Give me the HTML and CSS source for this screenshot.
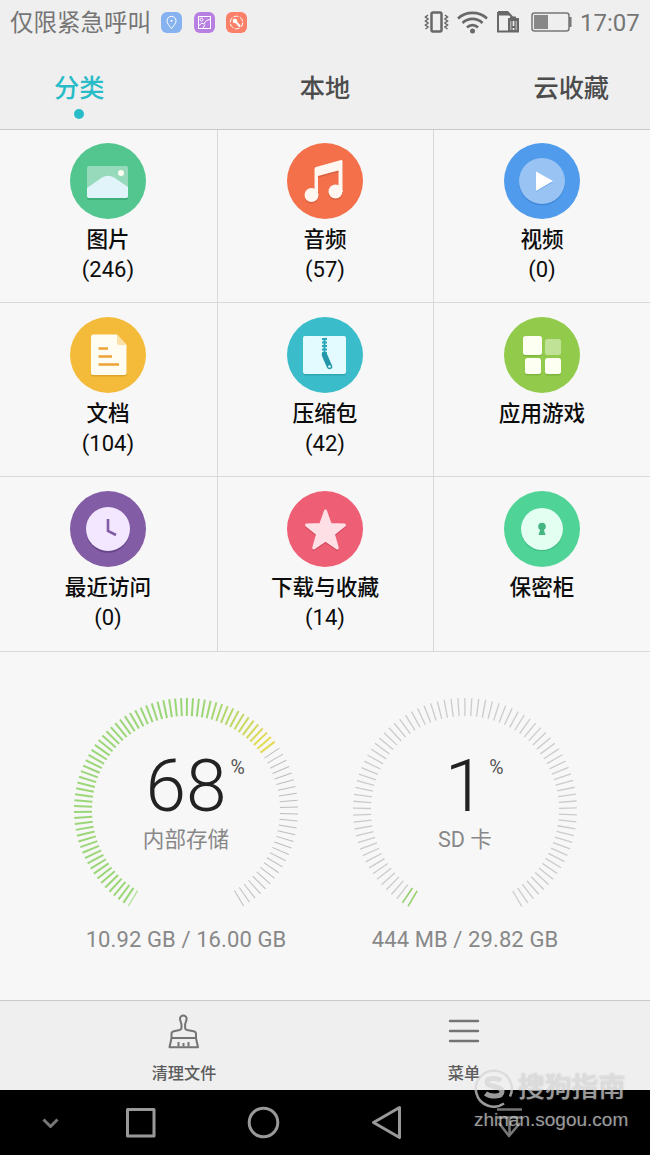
FILE: index.html
```html
<!DOCTYPE html>
<html lang="zh-CN">
<head>
    <meta charset="UTF-8">
    <meta name="viewport" content="width=device-width, initial-scale=1.0">
    <title>文件管理</title>
    <link rel="stylesheet" href="styles.css">
</head>
<body>
    <div class="screen">
        <div class="statusbar">
            <span class="carrier">仅限紧急呼叫</span>
            <div class="notices">
                <svg width="21" height="21" viewBox="0 0 21 21" fill="none" stroke="#fff">
                    <rect width="21" height="21" rx="6" fill="#86b3f0" stroke="none"/>
                    <path d="M10.5 16.5C8 13.5 6 11.2 6 8.8a4.5 4.5 0 0 1 9 0c0 2.4-2 4.7-4.5 7.7z"/>
                    <circle cx="10.5" cy="8.8" r="1" fill="#fff" stroke="none"/>
                </svg>
                <svg width="21" height="21" viewBox="0 0 21 21" fill="none" stroke="#fff">
                    <rect width="21" height="21" rx="6" fill="#b87fe2" stroke="none"/>
                    <rect x="4.5" y="4.5" width="12" height="12"/>
                    <circle cx="7.5" cy="7.5" r="1.5"/>
                    <path d="M5 13.5l3-2.5 2 1c1-3 3-4 6-4.5M9 16l2-3.5"/>
                </svg>
                <svg width="21" height="21" viewBox="0 0 21 21" fill="none" stroke="#fff">
                    <rect width="21" height="21" rx="6" fill="#fb8069" stroke="none"/>
                    <circle cx="10.5" cy="10.5" r="6.3" stroke-dasharray="5 1.5"/>
                    <circle cx="9" cy="9" r="2.3" fill="#fff" stroke="none"/>
                    <path d="M10 10l4 4.5" stroke-width="2"/>
                </svg>
            </div>
            <div class="indicators">
                <svg width="25" height="22" viewBox="0 0 25 22" fill="none" stroke="#686868">
                    <rect x="7.5" y="1.5" width="10" height="19" rx="1.5" stroke-width="2.5"/>
                    <path d="M4 4L1.5 6 4 8 1.5 10 4 12 1.5 14 4 16 1.5 18M21 4l2.5 2L21 8l2.5 2-2.5 2 2.5 2-2.5 2 2.5 2" stroke-width="1.6"/>
                </svg>
                <svg width="31" height="23" viewBox="0 0 31 23" fill="none" stroke="#686868" stroke-width="2.6">
                    <path d="M1 7.5c8-7.500 21-7.500 29 0M5.5 12c5.5-5.5 14.500-5.500 20 0M10 16.500c3-3.200 8-3.200 11 0"/>
                    <circle cx="15.5" cy="20" r="2.5" fill="#686868" stroke="none"/>
                </svg>
                <svg width="22" height="22" viewBox="0 0 22 22">
                    <path d="M1 1h9.500l4.500 5v2M1 1v19.500h10" fill="none" stroke="#686868" stroke-width="2"/>
                    <path d="M1 0h9.500L14.500 4.500H1zM11 7h2V5.500h6V7h3v14.500H11z" fill="#686868"/>
                    <path d="M13 10h1.500v9H13zM18.500 10H20v9h-1.500z" fill="#aaa"/>
                    <path d="M16.500 10v5M16.500 17v2" stroke="#efefef" stroke-width="1.7"/>
                </svg>
                <svg class="battery" width="41" height="20" viewBox="0 0 41 20">
                    <rect x="1" y="1" width="37" height="18" rx="2.5" fill="none" stroke="#777" stroke-width="1.5"/>
                    <rect x="3" y="3" width="14" height="14" fill="#888"/>
                    <path d="M38 5h2.500v10H38z" fill="#777"/>
                </svg>
            </div>
            <span class="time">17:07</span>
        </div>

        <div class="tabs">
            <div class="tab active">分类</div>
            <div class="tab">本地</div>
            <div class="tab">云收藏</div>
        </div>

        <div class="categories">
            <div class="category">
                <svg class="icon" viewBox="0 0 76 76">
                    <circle cx="38" cy="38" r="38" fill="#53c690"/>
                    <rect x="17" y="25" width="41" height="32" rx="2" fill="#3fb07b"/>
                    <rect x="17" y="23" width="41" height="32" rx="2" fill="#96dabb"/>
                    <path d="M17 45L32 34.500q6-3.500 12 0L58 44v9q0 2-2 2H19q-2 0-2-2z" fill="#e0f4f9"/>
                    <circle cx="51" cy="30" r="3" fill="#fffdf0"/>
                </svg>
                <div class="name">图片</div>
                <div class="count">(246)</div>
            </div>
            <div class="category">
                <svg class="icon" viewBox="0 0 76 76">
                    <circle cx="38" cy="38" r="38" fill="#f3704a"/>
                    <g fill="#d75f3e" transform="translate(0 1.5)">
                        <path d="M27.500 52V26q0-1.500 1.500-2l25-7q1.500 0 1.500 1v31h-4V27.500L31 33v19z"/>
                        <circle cx="24.5" cy="52" r="7"/>
                        <circle cx="48.5" cy="48.5" r="7"/>
                    </g>
                    <g fill="#fff7f0">
                        <path d="M27.500 52V26q0-1.500 1.500-2l25-7q1.500 0 1.500 1v31h-4V27.500L31 33v19z"/>
                        <circle cx="24.5" cy="52" r="7"/>
                        <circle cx="48.5" cy="48.5" r="7"/>
                    </g>
                </svg>
                <div class="name">音频</div>
                <div class="count">(57)</div>
            </div>
            <div class="category">
                <svg class="icon" viewBox="0 0 76 76">
                    <circle cx="38" cy="38" r="38" fill="#509bec"/>
                    <circle cx="38" cy="39.5" r="23" fill="#4088d7"/>
                    <circle cx="38" cy="38" r="23" fill="#98c3f3"/>
                    <path d="M32 29.500v19.500l17-10z" fill="#6da9e9"/>
                    <path d="M32 28.500v19.500l17-10z" fill="#fff"/>
                </svg>
                <div class="name">视频</div>
                <div class="count">(0)</div>
            </div>

            <div class="category">
                <svg class="icon" viewBox="0 0 76 76">
                    <circle cx="38" cy="38" r="38" fill="#f4bb3a"/>
                    <rect x="21" y="30" width="35.5" height="29.5" rx="2" fill="#dda42c"/>
                    <path d="M23 17.500h24L56.500 28v27.500q0 2.500-2 2.500H23q-2 0-2-2.500V20q0-2.500 2-2.500z" fill="#fffdf2"/>
                    <path d="M47 17.500L56.500 28H49q-2 0-2-2z" fill="#fbe1a7"/>
                    <path d="M28.500 31.500h9.500M28.500 39.500h13.500M28.500 47.500h20.500" stroke="#eda334" stroke-width="2.4"/>
                </svg>
                <div class="name">文档</div>
                <div class="count">(104)</div>
            </div>
            <div class="category">
                <svg class="icon" viewBox="0 0 76 76">
                    <circle cx="38" cy="38" r="38" fill="#3bbccb"/>
                    <rect x="16" y="20.5" width="43" height="38" rx="2" fill="#2fa4b3"/>
                    <rect x="16" y="19" width="43" height="38" rx="2" fill="#e3fbff"/>
                    <path d="M37.500 21v18" stroke="#2ca8bb" stroke-width="5" stroke-dasharray="2 1.5"/>
                    <path d="M37.500 21v20" stroke="#2ca8bb" stroke-width="2"/>
                    <path d="M37.500 38l5 11.500" stroke="#2597aa" stroke-width="5.5" stroke-linecap="round"/>
                    <circle cx="42.5" cy="49.5" r="1.3" fill="#e3fbff"/>
                </svg>
                <div class="name">压缩包</div>
                <div class="count">(42)</div>
            </div>
            <div class="category">
                <svg class="icon" viewBox="0 0 76 76">
                    <circle cx="38" cy="38" r="38" fill="#92ca4b"/>
                    <rect x="19" y="20.5" width="19" height="19" rx="2.5" fill="#7eb53c"/>
                    <rect x="21" y="42" width="16" height="16.5" rx="2.5" fill="#7eb53c"/>
                    <rect x="41" y="42" width="16" height="16.5" rx="2.5" fill="#7eb53c"/>
                    <rect x="19" y="19" width="19" height="19" rx="2.5" fill="#fcfff2"/>
                    <rect x="41" y="22" width="16" height="16" rx="2.5" fill="#c0e296"/>
                    <rect x="21" y="41" width="16" height="16" rx="2.5" fill="#fcfff2"/>
                    <rect x="41" y="41" width="16" height="16" rx="2.5" fill="#fcfff2"/>
                </svg>
                <div class="name">应用游戏</div>
            </div>

            <div class="category">
                <svg class="icon" viewBox="0 0 76 76">
                    <circle cx="38" cy="38" r="38" fill="#825ca5"/>
                    <circle cx="38" cy="39.8" r="22" fill="#684689"/>
                    <circle cx="38" cy="38" r="22" fill="#f3e7ff"/>
                    <path d="M38 28v12l8 4" fill="none" stroke="#825ca5" stroke-width="2.6"/>
                </svg>
                <div class="name">最近访问</div>
                <div class="count">(0)</div>
            </div>
            <div class="category">
                <svg class="icon" viewBox="0 0 76 76">
                    <circle cx="38" cy="38" r="38" fill="#ee5e74"/>
                    <path d="M38.500 21.500l4.800 13.500 14.200.5-11.200 9 4 14-11.800-8-11.800 8 4-14-11.200-9 14.200-.5z" fill="#d54b62" stroke="#d54b62" stroke-width="3" stroke-linejoin="round"/>
                    <path d="M38.500 20l4.800 13.500 14.200.5-11.200 9 4 14-11.800-8-11.800 8 4-14-11.200-9 14.200-.5z" fill="#ffdfe6" stroke="#ffdfe6" stroke-width="3" stroke-linejoin="round"/>
                </svg>
                <div class="name">下载与收藏</div>
                <div class="count">(14)</div>
            </div>
            <div class="category">
                <svg class="icon" viewBox="0 0 76 76">
                    <circle cx="38" cy="38" r="38" fill="#50d397"/>
                    <circle cx="38" cy="39.3" r="21" fill="#3fbd84"/>
                    <circle cx="38" cy="38" r="21" fill="#e2fff2"/>
                    <circle cx="38" cy="35.5" r="3.8" fill="#45b581"/>
                    <path d="M37 36h2l2.500 8h-7z" fill="#45b581"/>
                </svg>
                <div class="name">保密柜</div>
            </div>
        </div>

        <div class="storage">
            <div class="gauge-box">
                <div class="gauge">
                    <svg class="ticks" id="internal" viewBox="-113 -113 226 226"></svg>
                    <div class="readout">
                        <div class="percent"><span class="value">68</span><span class="sign">%</span></div>
                        <div class="place">内部存储</div>
                    </div>
                </div>
                <div class="usage">10.92 GB / 16.00 GB</div>
            </div>
            <div class="gauge-box">
                <div class="gauge">
                    <svg class="ticks" id="sdcard" viewBox="-113 -113 226 226"></svg>
                    <div class="readout">
                        <div class="percent"><span class="value">1</span><span class="sign">%</span></div>
                        <div class="place">SD 卡</div>
                    </div>
                </div>
                <div class="usage">444 MB / 29.82 GB</div>
            </div>
        </div>

        <div class="toolbar">
            <div class="tool">
                <svg width="32" height="36" viewBox="0 0 32 36" fill="none" stroke="#747474" stroke-width="2" stroke-linejoin="round">
                    <path d="M13.500 11.500c-.5-2.500-1.500-4-1.500-5.800a3.300 3.300 0 0 1 6.600 0c0 1.800-1 3.300-1.500 5.800v3q0 2 2 2.500l6.400 1.200q2.500.5 2.500 2.500v4.500l2 9H1.500l2-9v-4.500q0-2 2.500-2.500l5.500-1.200q2-.5 2-2.500z"/>
                    <path d="M3.500 25h24.500M10.500 33.500v-4.500M15.500 33.500v-3.500M20.500 33.500v-4.500"/>
                </svg>
                <div class="tool-name">清理文件</div>
            </div>
            <div class="tool">
                <svg width="32" height="36" viewBox="0 0 32 36" stroke="#747474" stroke-width="2.4" stroke-linecap="round">
                    <path d="M2 8h28M2 18h28M2 28h28"/>
                </svg>
                <div class="tool-name">菜单</div>
            </div>
        </div>

        <div class="navbar">
            <svg width="650" height="65" viewBox="0 0 650 65" fill="none" stroke="#999" stroke-width="3" stroke-linejoin="round">
                <path d="M43.500 29.500l7 7 7-7" stroke="#777"/>
                <rect x="127.5" y="19.5" width="26.5" height="26.5"/>
                <circle cx="263.5" cy="32.5" r="14.3"/>
                <path d="M373.500 32.500L399.500 17.500v30z"/>
                <path d="M497 19.500h25M497 27.500h25M499 33l10 13 11-13M509.500 29v15" stroke="#777" stroke-width="2.6"/>
            </svg>
        </div>

        <div class="watermark">
            <div class="brand">
                <svg width="40" height="40" viewBox="0 0 40 40" fill="none" stroke="#d6d6d6">
                    <path d="M30 35.500A18 18 0 1 1 36 28.500" stroke-width="2.5"/>
                    <path d="M27 12.500c-3-2.500-14-3.500-14 1.500 0 5.500 15 3.500 15 9.500 0 6-12 5.500-16.500 2" stroke-width="5"/>
                </svg>
                <span>搜狗指南</span>
            </div>
            <div class="site">zhinan.sogou.com</div>
        </div>
    </div>
    <script>
        // angles are degrees clockwise from the top of the dial
        const drawTicks = (id, from, to, count, width, color) => {
            const svg = document.getElementById(id);
            for (let i = 0; i < count; i++) {
                const angle = from + (to - from) * i / (count - 1);
                const line = document.createElementNS('http://www.w3.org/2000/svg', 'line');
                line.setAttribute('y1', -112);
                line.setAttribute('y2', -94);
                line.setAttribute('transform', `rotate(${angle})`);
                line.setAttribute('stroke', color(angle));
                line.setAttribute('stroke-width', width);
                svg.appendChild(line);
            }
        };

        // green, fading to yellow past the top
        const fill = (angle) => {
            const t = Math.min(1, Math.max(0, (angle - 10) / 38));
            return `rgb(${155 + 72 * t}, ${214 + 4 * t}, ${120 - 35 * t})`;
        };

        drawTicks('internal', -149, -149, 2, 1.2, () => '#bfe5aa');
        drawTicks('internal', -146, 52.4, 66, 2, fill);
        drawTicks('internal', 56.5, 149, 27, 1, () => '#bdbdbd');
        drawTicks('sdcard', -149.4, -146, 2, 1.6, () => '#94cf70');
        drawTicks('sdcard', -142.5, 149.5, 83, 1.3, () => '#cbcbcb');
    </script>
</body>
</html>
```
FILE: styles.css
```css
* {
    box-sizing: border-box;
}

body {
    margin: 0;
    font-family: Roboto, 'Noto Sans CJK SC', sans-serif;
    background: #f7f7f7;
}

svg {
    display: block;
    flex-shrink: 0;
}

.screen {
    position: relative;
    width: 650px;
    height: 1155px;
    display: flex;
    flex-direction: column;
    overflow: hidden;
}

.statusbar {
    display: flex;
    align-items: center;
    height: 44px;
    padding: 0 11px 0 10px;
    background: #efefef;
    color: #757575;
}

.carrier {
    padding-top: 2px;
    font-size: 23.5px;
    line-height: 42px;
}

.notices {
    display: flex;
    gap: 11.5px;
    margin-left: 10px;
}

.indicators {
    display: flex;
    align-items: center;
    gap: 8.5px;
    margin-left: auto;
}

.battery {
    margin-left: 4px;
}

.time {
    width: 59px;
    padding-top: 1px;
    margin-left: 8px;
    font-size: 24px;
    white-space: nowrap;
}

.tabs {
    display: grid;
    grid-template-columns: 1fr auto 1fr;
    height: 86px;
    padding: 27px 41px 0 54px;
    background: #efefef;
    border-bottom: 1px solid #c9c9c9;
}

.tab {
    font-size: 25.2px;
    font-weight: 500;
    line-height: 36px;
    color: #4c4c4c;
}

.tab:nth-child(2) {
    padding-right: 13px;
}

.tab:last-child {
    justify-self: end;
}

.tab.active {
    justify-self: start;
    color: #28bcc8;
}

.tab.active::after {
    content: '';
    display: block;
    width: 10px;
    height: 10px;
    margin: 2px auto 0;
    border-radius: 50%;
    background: #28bcc8;
}

.categories {
    display: grid;
    grid-template-columns: 218px 216px 216px;
    grid-template-rows: 173px 174px 175px;
}

.category {
    display: flex;
    flex-direction: column;
    align-items: center;
    padding: 13px 1px 0 0;
    border-right: 1px solid #d8d8d8;
    border-bottom: 1px solid #d8d8d8;
    color: #0c0c0c;
}

.category:nth-child(n+4) {
    padding-top: 14px;
}

.category:nth-child(3n) {
    padding-right: 0;
    border-right: none;
}

.icon {
    width: 76px;
    height: 76px;
}

.name {
    margin-top: 6px;
    font-size: 21.6px;
    font-weight: 500;
    line-height: 30px;
}

.count {
    font-size: 22px;
    line-height: 30px;
}

.storage {
    display: grid;
    grid-template-columns: 279px 279px;
    height: 348px;
    padding: 45px 46px 0 46.5px;
}

.gauge-box {
    text-align: center;
}

.gauge {
    display: grid;
    justify-items: center;
}

.ticks,
.readout {
    grid-area: 1 / 1;
}

.ticks {
    width: 226px;
    height: 226px;
}

.readout {
    width: 200px;
    padding-top: 51px;
}

.percent {
    display: grid;
    grid-template-columns: 1fr auto 1fr;
    color: #222;
    font-weight: 300;
}

.value {
    grid-column: 2;
    font-size: 73px;
    line-height: 76px;
}

.sign {
    padding: 9px 0 0 4px;
    font-size: 19.5px;
    font-weight: 400;
    line-height: 22px;
    text-align: left;
    color: #555;
}

.place {
    margin-top: 1px;
    font-size: 21.6px;
    line-height: 30px;
    color: #888;
}

.usage {
    margin-top: 2px;
    font-size: 22px;
    line-height: 30px;
    letter-spacing: 0.1px;
    color: #888;
}

.toolbar {
    display: grid;
    grid-template-columns: 280px 280px;
    height: 90px;
    padding: 12px 46px 0 44px;
    background: #efefef;
    border-top: 1px solid #c9c9c9;
}

.tool {
    display: flex;
    flex-direction: column;
    align-items: center;
}

.tool-name {
    margin-top: 13px;
    font-size: 16.2px;
    font-weight: 500;
    line-height: 24px;
    color: #5c5c5c;
}

.navbar {
    height: 65px;
    background: #000;
}

.watermark {
    position: absolute;
    left: 474px;
    top: 1067px;
    color: #d6d6d6;
    opacity: 0.72;
    text-shadow: 0 0 2px rgba(120, 120, 120, 0.5);
}

.brand {
    display: flex;
    align-items: center;
    gap: 4px;
    height: 41px;
    font-size: 26.8px;
    font-weight: 500;
    line-height: 40px;
    white-space: nowrap;
}

.site {
    font-family: 'Liberation Sans', Arial, sans-serif;
    font-size: 19px;
    line-height: 24px;
}
```
